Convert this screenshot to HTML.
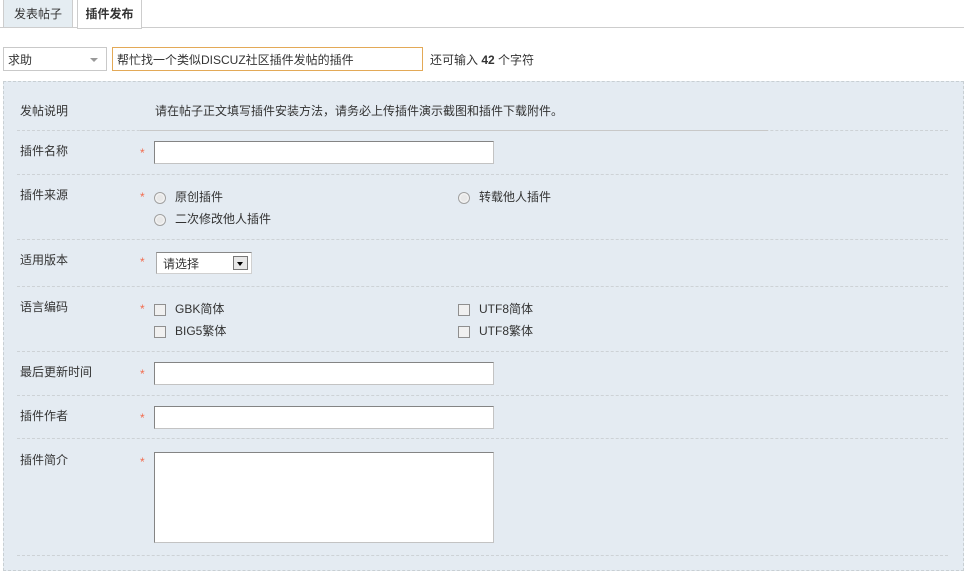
<!DOCTYPE html>
<html><head><meta charset="utf-8"><style>
*{margin:0;padding:0;box-sizing:border-box}
body{width:964px;height:565px;overflow:hidden;background:#fff;font:12px "Liberation Sans","Noto Sans CJK SC",sans-serif;color:#333;position:relative}
.a{position:absolute;white-space:nowrap;line-height:14px}
.tabbar{position:absolute;left:0;top:27px;width:964px;height:1px;background:#cdcdcd}
.tab{position:absolute;top:0;height:28px;line-height:28px;text-align:center;border:1px solid #cdcdcd;border-top:none}
.panel{position:absolute;left:3px;top:81px;width:961px;height:490px;background:#e4ebf2;border:1px dashed #c8cfd3}
.sep{position:absolute;left:17px;width:931px;height:0;border-top:1px dashed #cdd2d6}
.inp{position:absolute;left:154px;width:340px;height:23px;background:#fff;border:1px solid #c3c3c3;border-top-color:#848484;border-left-color:#848484}
.star{position:absolute;left:140px;color:#f26c4f;font-size:12px}
.rad{position:absolute;width:12px;height:12px;border-radius:50%;border:1px solid #a0a0a0;background:radial-gradient(circle,#e8e8e8 40%,#f8f8f8 70%)}
.chk{position:absolute;width:12px;height:12px;border:1px solid #8f8f8f;background:#f0f0f0}
</style></head><body>
<div class="tabbar"></div>
<div class="tab" style="left:3px;width:70px;background:#e5edf2">发表帖子</div>
<div class="tab" style="left:77px;width:65px;background:#fff;height:29px;font-weight:bold">插件发布</div>

<div style="position:absolute;left:3px;top:47px;width:104px;height:24px;border:1px solid #c9c9c9;background:#fff"></div>
<div class="a" style="left:8px;top:53px">求助</div>
<div style="position:absolute;left:90px;top:58px;border:4px solid transparent;border-top:4px solid #999;border-bottom:none"></div>
<div style="position:absolute;left:112px;top:47px;width:311px;height:24px;border:1px solid #e3a957;background:#fff"></div>
<div class="a" style="left:117px;top:53px">帮忙找一个类似DISCUZ社区插件发帖的插件</div>
<div class="a" style="left:430px;top:53px">还可输入 <b>42</b> 个字符</div>

<div class="panel"></div>
<div class="a" style="left:20px;top:104px">发帖说明</div>
<div class="a" style="left:155px;top:104px">请在帖子正文填写插件安装方法，请务必上传插件演示截图和插件下载附件。</div>
<div class="sep" style="top:130px"></div>
<div style="position:absolute;left:140px;top:130px;width:628px;height:1px;background:#c8c8c8"></div>

<div class="a" style="left:20px;top:144px">插件名称</div><div class="star" style="top:146px">*</div>
<div class="inp" style="top:141px"></div>
<div class="sep" style="top:174px"></div>

<div class="a" style="left:20px;top:188px">插件来源</div><div class="star" style="top:190px">*</div>
<div class="rad" style="left:154px;top:192px"></div><div class="a" style="left:175px;top:190px">原创插件</div>
<div class="rad" style="left:458px;top:192px"></div><div class="a" style="left:479px;top:190px">转载他人插件</div>
<div class="rad" style="left:154px;top:214px"></div><div class="a" style="left:175px;top:212px">二次修改他人插件</div>
<div class="sep" style="top:239px"></div>

<div class="a" style="left:20px;top:253px">适用版本</div><div class="star" style="top:255px">*</div>
<div style="position:absolute;left:156px;top:252px;width:96px;height:22px;background:#fff;border:1px solid #d0d0d0;border-top-color:#888;border-left-color:#aaa"></div>
<div class="a" style="left:163px;top:257px">请选择</div>
<div style="position:absolute;left:233px;top:256px;width:15px;height:14px;border:1px solid #777;background:#e8e8e8"></div>
<div style="position:absolute;left:237px;top:262px;border:3.5px solid transparent;border-top:4px solid #000;border-bottom:none"></div>
<div class="sep" style="top:286px"></div>

<div class="a" style="left:20px;top:300px">语言编码</div><div class="star" style="top:302px">*</div>
<div class="chk" style="left:154px;top:304px"></div><div class="a" style="left:175px;top:302px">GBK简体</div>
<div class="chk" style="left:458px;top:304px"></div><div class="a" style="left:479px;top:302px">UTF8简体</div>
<div class="chk" style="left:154px;top:326px"></div><div class="a" style="left:175px;top:324px">BIG5繁体</div>
<div class="chk" style="left:458px;top:326px"></div><div class="a" style="left:479px;top:324px">UTF8繁体</div>
<div class="sep" style="top:351px"></div>

<div class="a" style="left:20px;top:365px">最后更新时间</div><div class="star" style="top:367px">*</div>
<div class="inp" style="top:362px"></div>
<div class="sep" style="top:395px"></div>

<div class="a" style="left:20px;top:409px">插件作者</div><div class="star" style="top:411px">*</div>
<div class="inp" style="top:406px"></div>
<div class="sep" style="top:438px"></div>

<div class="a" style="left:20px;top:453px">插件简介</div><div class="star" style="top:455px">*</div>
<div class="inp" style="top:452px;height:91px"></div>
<div class="sep" style="top:555px"></div>
</body></html>
